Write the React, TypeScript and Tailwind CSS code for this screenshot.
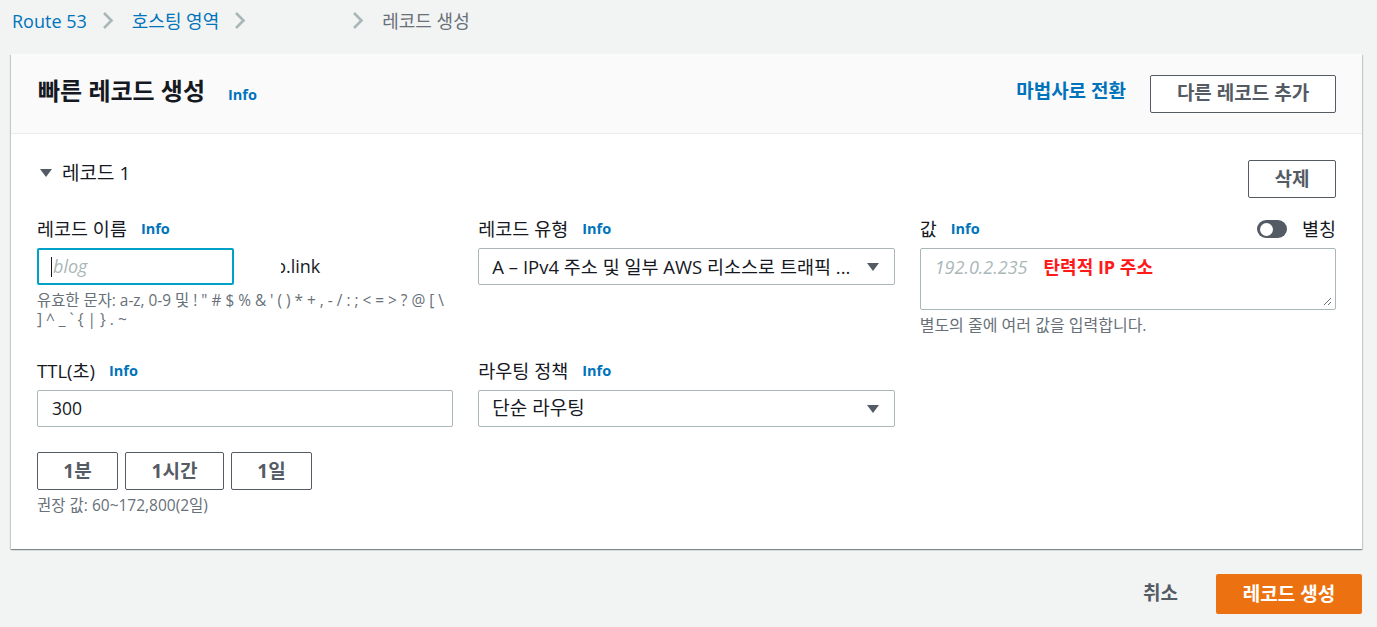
const font = { fontFamily: '"Open Sans", "Noto Sans CJK KR", sans-serif' };

function Info() {
  return <span className="ml-[14px] text-[14.5px] font-bold text-[#0073bb]">Info</span>;
}

function Caret() {
  return (
    <svg width="14" height="10" viewBox="0 0 14 10" className="shrink-0">
      <path d="M1 1h12L7 9z" fill="#545b64" />
    </svg>
  );
}

function Crumb() {
  return (
    <svg width="12" height="19" viewBox="0 0 12 19" className="shrink-0">
      <path d="M2 2l7.5 7.5L2 17" fill="none" stroke="#aab7b8" strokeWidth="2.6" />
    </svg>
  );
}

function Label({ children, right }: { children: React.ReactNode; right?: React.ReactNode }) {
  return (
    <div className="flex h-[24px] items-center text-[18.5px] leading-[24px] text-[#16191f]">
      {children}
      <Info />
      {right}
    </div>
  );
}

const btn =
  "rounded-[2px] border border-[#545b64] bg-white text-[19px] font-bold leading-none text-[#545b64]";

export default function App() {
  return (
    <div style={font} className="h-[627px] w-full overflow-hidden bg-[#f2f3f3] text-[#16191f]">
      {/* breadcrumb */}
      <nav className="flex h-[41px] items-center pl-[12px] text-[18px] leading-none">
        <span className="text-[#0073bb]">Route 53</span>
        <span className="ml-[15px] mr-[18px]">
          <Crumb />
        </span>
        <span className="text-[#0073bb]">호스팅 영역</span>
        <span className="ml-[15px]">
          <Crumb />
        </span>
        <span className="w-[106px]" />
        <span className="mr-[18px]">
          <Crumb />
        </span>
        <span className="text-[#687078]">레코드 생성</span>
      </nav>

      <div className="mx-[11px] mt-[13px] w-[1351px] bg-white shadow-[0_1px_1px_0_rgba(0,28,36,0.3),1px_1px_1px_0_rgba(0,28,36,0.15),-1px_1px_1px_0_rgba(0,28,36,0.15)]">
        {/* header */}
        <div className="flex h-[80px] items-center border-b border-[#eaeded] bg-[#fafafa] pl-[27px] pr-[26px]">
          <h1 className="mb-[6px] text-[24px] font-bold leading-none">빠른 레코드 생성</h1>
          <span className="ml-[23px] mt-[2px] text-[14.5px] font-bold text-[#0073bb]">Info</span>
          <span className="mb-[4px] ml-auto text-[19px] font-bold leading-none text-[#0073bb]">마법사로 전환</span>
          <button className={`ml-[24px] h-[38px] w-[186px] ${btn}`}>다른 레코드 추가</button>
        </div>

        {/* body */}
        <div className="px-[26px] pb-[33px] pt-[26px]">
          <div className="flex items-start justify-between">
            <div className="mt-[1px] flex items-center gap-[9px] pl-[2px] text-[19px] leading-[24px]">
              <Caret />
              <span>레코드 1</span>
            </div>
            <button className={`h-[38px] w-[88px] ${btn}`}>삭제</button>
          </div>

          <div className="mt-[19px] grid grid-cols-3 gap-x-[25px]">
            <div>
              <Label>레코드 이름</Label>
              <div className="mt-[7px] flex h-[37px] items-center">
                <div className="flex h-[37px] w-[197px] items-center rounded-[2px] border-2 border-[#00a1c9] pl-[12px] text-[18px] italic text-[#aab7b8]">
                  <span className="mr-[1px] h-[20px] w-[1px] bg-[#16191f]" />
                  blog
                </div>
                <span className="ml-[47px] inline-flex w-[5px] justify-end overflow-hidden text-[18px]">o</span>
                <span className="text-[18px]">.link</span>
              </div>
              <p className="mt-[6px] text-[15.4px] leading-[19px] text-[#687078]">
                유효한 문자: a-z, 0-9 및 ! " # $ % &amp; ' ( ) * + , - / : ; &lt; = &gt; ? @ [ \
                <br />] ^ _ ` {"{"} | {"}"} . ~
              </p>
            </div>

            <div>
              <Label>레코드 유형</Label>
              <div className="mt-[7px] flex h-[37px] items-center justify-between rounded-[2px] border border-[#aab7b8] pl-[13px] pr-[14px] text-[18.5px]">
                <span>A – IPv4 주소 및 일부 AWS 리소스로 트래픽 ...</span>
                <Caret />
              </div>
            </div>

            <div>
              <Label
                right={
                  <div className="ml-auto flex items-center">
                    <span className="flex h-[18px] w-[30px] items-center rounded-full bg-[#545b64] pl-[3px]">
                      <span className="h-[13px] w-[13px] rounded-full bg-white" />
                    </span>
                    <span className="ml-[15px]">별칭</span>
                  </div>
                }
              >
                값
              </Label>
              <div className="relative mt-[7px] h-[62px] rounded-[2px] border border-[#aab7b8] pl-[14px] pt-[5px] text-[18px] leading-[26px]">
                <span className="italic text-[#aab7b8]">192.0.2.235</span>
                <span className="ml-[16px] font-bold text-[#ff1a1a]">탄력적 IP 주소</span>
                <svg width="10" height="10" viewBox="0 0 10 10" className="absolute bottom-[3px] right-[3px]">
                  <path d="M9 2L2 9M9 6L6 9" stroke="#687078" strokeWidth="1" />
                </svg>
              </div>
              <p className="mt-[4px] text-[16px] leading-[22px] text-[#687078]">별도의 줄에 여러 값을 입력합니다.</p>
            </div>
          </div>

          <div className="mt-[23px] grid grid-cols-3 gap-x-[25px]">
            <div>
              <Label>TTL(초)</Label>
              <div className="mt-[7px] flex h-[37px] items-center rounded-[2px] border border-[#aab7b8] pl-[14px] text-[17.5px]">
                300
              </div>
              <div className="mt-[25px] flex gap-[7px]">
                <button className={`h-[38px] w-[81px] ${btn}`}>1분</button>
                <button className={`h-[38px] w-[99px] ${btn}`}>1시간</button>
                <button className={`h-[38px] w-[81px] ${btn}`}>1일</button>
              </div>
              <p className="mt-[4px] text-[15.5px] leading-[22px] text-[#687078]">권장 값: 60~172,800(2일)</p>
            </div>
            <div>
              <Label>라우팅 정책</Label>
              <div className="mt-[7px] flex h-[37px] items-center justify-between rounded-[2px] border border-[#aab7b8] pl-[13px] pr-[14px] text-[19px]">
                <span>단순 라우팅</span>
                <Caret />
              </div>
            </div>
            <div />
          </div>
        </div>
      </div>

      {/* footer */}
      <div className="mt-[25px] flex items-center justify-end pr-[15px]">
        <span className="mb-[2px] mr-[38px] text-[19px] font-bold leading-none text-[#545b64]">취소</span>
        <button className="h-[40px] w-[146px] rounded-[2px] bg-[#ec7211] text-[19px] font-bold leading-none text-white">
          레코드 생성
        </button>
      </div>
    </div>
  );
}
